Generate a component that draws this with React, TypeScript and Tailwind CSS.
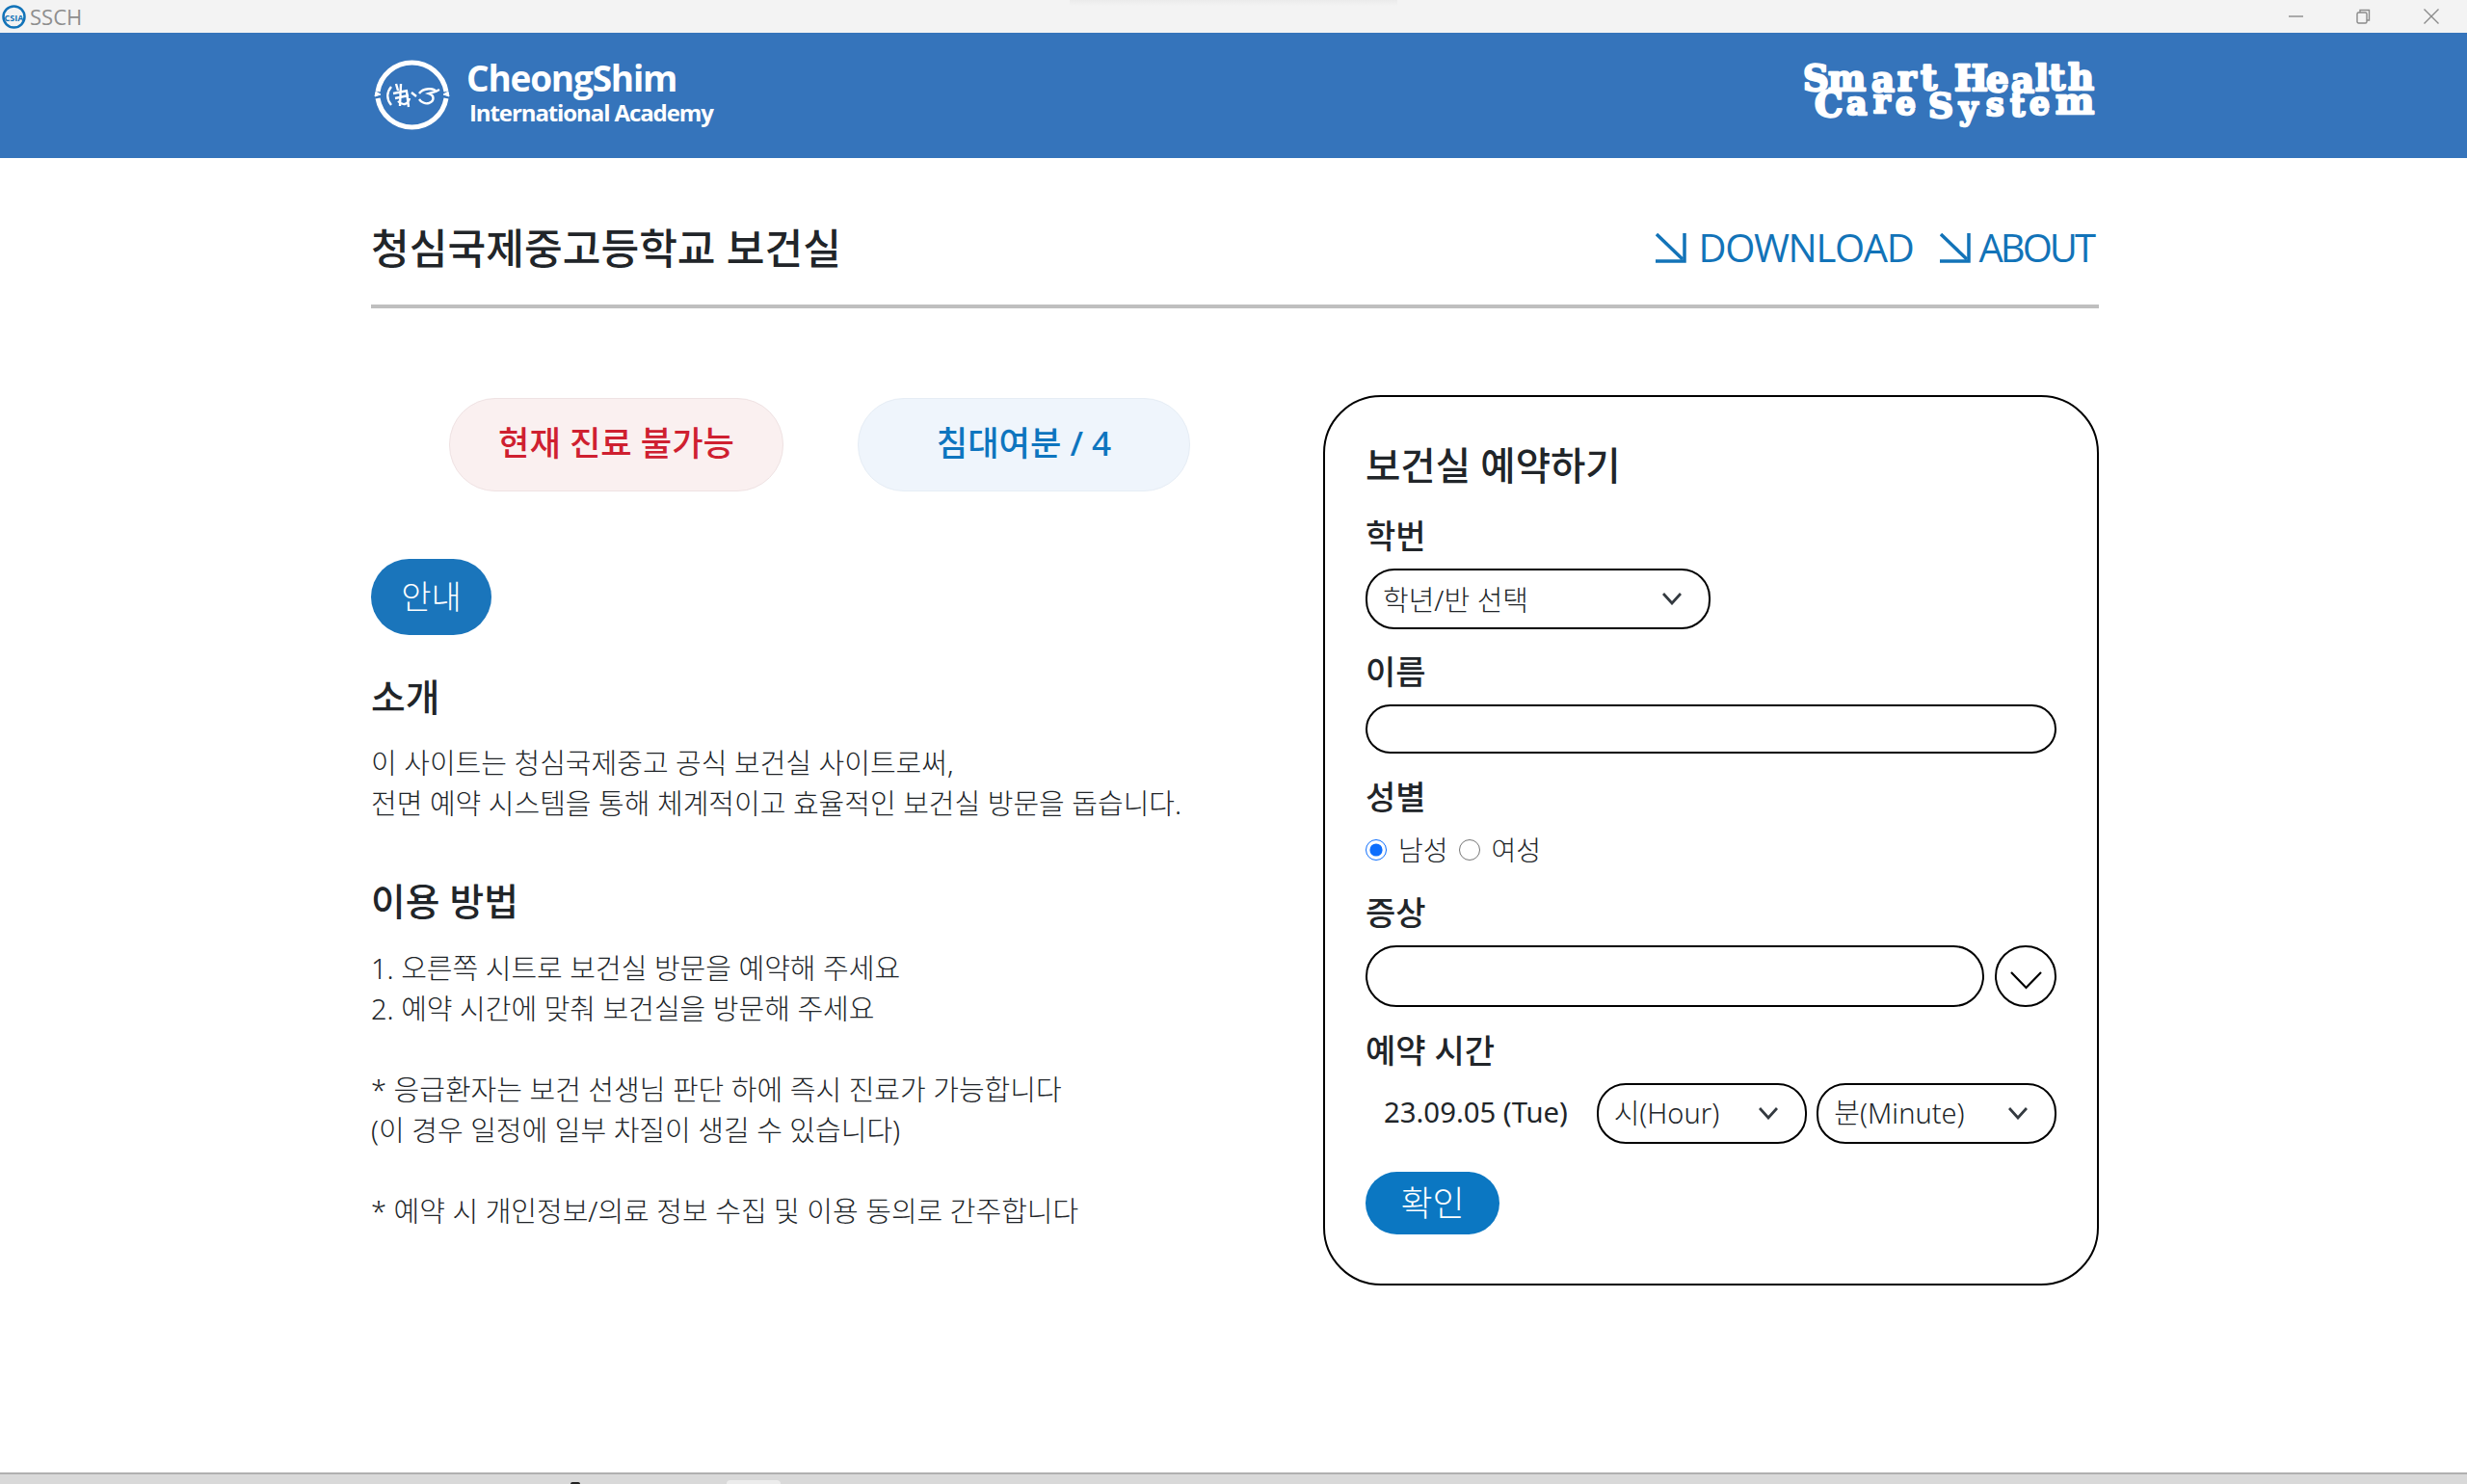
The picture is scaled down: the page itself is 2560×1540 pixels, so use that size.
const sans = "font-['Noto_Sans','Noto_Sans_CJK_KR',sans-serif]";

function CornerArrow() {
  return (
    <svg width="32" height="31" viewBox="0 0 32 31" fill="none" className="shrink-0 text-[#1273b8]">
      <path d="M1 1 L28 27" stroke="currentColor" strokeWidth="3.5" />
      <path d="M0 29 H30 V0" stroke="currentColor" strokeWidth="3.5" />
    </svg>
  );
}

function Chevron() {
  return (
    <svg width="20" height="13" viewBox="0 0 20 13" fill="none" stroke="#343a40" strokeWidth="2.8" className="shrink-0">
      <path d="M1 1 L10 11 L19 1" />
    </svg>
  );
}

function Emblem() {
  return (
    <svg width="85" height="85" viewBox="0 0 85 85" fill="none" stroke="white" className="shrink-0">
      <path d="M7 38 A36 36 0 0 1 78 38" strokeWidth="5" />
      <path d="M7 45 A36 36 0 0 0 78 45" strokeWidth="5" />
      <path d="M5 38 L10 41 L4 43 Z M80 38 L75 41 L81 43 Z" fill="white" strokeWidth="1" />
      <path d="M21 33 C16 39 16 46 21 52" strokeWidth="2.4" />
      <path d="M26 30 L28 37 M23 40 L38 37 M25 45 L39 42 M31 30 L30 53 M28 48 C33 53 38 52 40 45 M37 38 L39 54" strokeWidth="2.4" />
      <path d="M42 39 L47 43 M50 40 C54 34 66 34 67 38 L60 40 C66 42 66 48 60 50 C56 51 52 49 50 46" strokeWidth="2.4" />
      <path d="M67 38 L71 36" strokeWidth="2.4" />
    </svg>
  );
}

function HealthLogo() {
  return (
    <svg width="306" height="68" viewBox="11 10 306 68" fill="white" stroke="white" strokeWidth="2.4" strokeLinejoin="round" overflow="visible" className="shrink-0 font-['DejaVu_Serif',serif] font-bold">
      <text fontSize="37" x="10 36 81 108 132 150 167 200 226 251 265 285" y="39 39 40 39 38 38 39 40 41 39 38 38">Smart Health</text>
      <text fontSize="33" x="22 55 83 106 130 140 172 200 225 245 272" y="66 64 62 64 64 67 69 65 66 64 63">
        <tspan fontSize="37">C</tspan>are <tspan fontSize="36">S</tspan>yste<tspan fontSize="38">m</tspan>
      </text>
    </svg>
  );
}

function Label({ children, className = '' }: { children: React.ReactNode; className?: string }) {
  return <div className={`h-[44px] text-[34px] leading-[44px] font-medium text-[#212529] ${className}`}>{children}</div>;
}

function Select({ text, className, textClass = '' }: { text: string; className: string; textClass?: string }) {
  return (
    <div className={`flex h-[63px] items-center justify-between rounded-[30px] border-2 border-black pl-[16px] pr-[28px] text-[29px] font-light text-[#212529] ${className}`}>
      <span className={textClass}>{text}</span>
      <Chevron />
    </div>
  );
}

export default function App() {
  return (
    <div className={`relative flex h-[1540px] flex-col overflow-hidden bg-white ${sans}`}>
      {/* window title bar */}
      <div className="flex h-[34px] shrink-0 items-center bg-[#f3f3f3] pl-[2px]">
        <svg width="25" height="25" viewBox="0 0 25 25" fill="none" className="shrink-0">
          <circle cx="12.5" cy="12.5" r="11" stroke="#1273b8" strokeWidth="2.5" />
          <text x="12.5" y="16.5" textAnchor="middle" fontSize="9" fontWeight="700" fill="#1273b8" fontFamily="Open Sans">CSIA</text>
        </svg>
        <span className="ml-[4px] font-['Open_Sans',sans-serif] text-[22px] text-[#8e8e8e]">SSCH</span>
        <div className="ml-auto flex items-center text-[#8a8a8a]">
          <svg width="16" height="16" viewBox="0 0 16 16" fill="none" stroke="currentColor" strokeWidth="1.4" className="mr-[54px]">
            <path d="M0 8 H15" />
          </svg>
          <svg width="16" height="16" viewBox="0 0 16 16" fill="none" stroke="currentColor" strokeWidth="1.4" className="mr-[54px]">
            <rect x="1" y="4" width="10" height="11" rx="1.5" />
            <path d="M4 4 V1.5 H13.5 V12 H11" />
          </svg>
          <svg width="16" height="16" viewBox="0 0 16 16" fill="none" stroke="currentColor" strokeWidth="1.4" className="mr-[29px]">
            <path d="M0.5 0.5 L15.5 15.5 M15.5 0.5 L0.5 15.5" />
          </svg>
        </div>
      </div>
      <div className="absolute left-[1110px] top-0 h-[6px] w-[340px] bg-gradient-to-b from-[#ebebeb] to-transparent" />

      {/* site header */}
      <header className="h-[130px] shrink-0 bg-[#3574bb]">
        <div className="ml-[385px] flex h-full w-[1793px] items-center justify-between">
          <div className="flex items-center text-white">
            <Emblem />
            <div className="ml-[14px] mt-[-3px] font-['Open_Sans',sans-serif]">
              <div className="text-[37px] font-bold leading-[38px] tracking-[-1.2px]">CheongShim</div>
              <div className="ml-[3px] text-[24px] font-bold leading-[34px] tracking-[-1.1px]">International Academy</div>
            </div>
          </div>
          <HealthLogo />
        </div>
      </header>

      <main className="ml-[385px] w-[1793px] flex-1">
        <div className="flex h-[156px] items-center justify-between border-b-4 border-[#bfbfbf] pt-[36px]">
          <h1 className="text-[43.2px] font-medium text-[#212529]">청심국제중고등학교 보건실</h1>
          <nav className="flex items-center pb-[2px] font-['Open_Sans',sans-serif] text-[40px] font-medium leading-none text-[#1273b8]">
            <CornerArrow />
            <span className="ml-[12px] tracking-[-1.3px]">DOWNLOAD</span>
            <span className="ml-[27px]"><CornerArrow /></span>
            <span className="ml-[9px] mr-[6px] tracking-[-3px]">ABOUT</span>
          </nav>
        </div>

        <div className="mt-[90px] flex items-start justify-between">
          <section className="w-[860px] pt-[3px]">
            <div className="flex gap-[77px] pl-[81px] text-[35.2px] font-medium">
              <div className="flex h-[97px] w-[347px] items-center justify-center rounded-[48px] border border-[#efe2e3] bg-[#faf0f0] pb-[4px] text-[#cf2030]">현재 진료 불가능</div>
              <div className="flex h-[97px] w-[345px] items-center justify-center rounded-[48px] border border-[#e6edf5] bg-[#eff5fc] pb-[4px] text-[#0e75bf]">침대여분 / 4</div>
            </div>

            <div className="mt-[70px] flex h-[79px] w-[125px] items-center justify-center rounded-[40px] bg-[#1a75bb] text-[34px] font-light text-white">안내</div>

            <h2 className="mt-[39px] h-[50px] text-[38.8px] font-medium leading-[50px] text-[#212529]">소개</h2>
            <p className="mt-[23px] text-[29px] font-light leading-[42px] text-[#212529]">
              이 사이트는 청심국제중고 공식 보건실 사이트로써,
              <br />
              전면 예약 시스템을 통해 체계적이고 효율적인 보건실 방문을 돕습니다.
            </p>

            <h2 className="mt-[55px] h-[50px] text-[38.8px] font-medium leading-[50px] text-[#212529]">이용 방법</h2>
            <p className="mt-[24px] text-[29px] font-light leading-[42px] text-[#212529]">
              1. 오른쪽 시트로 보건실 방문을 예약해 주세요
              <br />
              2. 예약 시간에 맞춰 보건실을 방문해 주세요
              <br />
              <br />* 응급환자는 보건 선생님 판단 하에 즉시 진료가 가능합니다
              <br />
              (이 경우 일정에 일부 차질이 생길 수 있습니다)
              <br />
              <br />* 예약 시 개인정보/의료 정보 수집 및 이용 동의로 간주합니다
            </p>
          </section>

          <form className="w-[805px] rounded-[60px] border-2 border-black px-[42px] pb-[51px] pt-[46px]">
            <h2 className="h-[50px] text-[39.5px] font-medium leading-[50px] text-[#212529]">보건실 예약하기</h2>

            <Label className="mt-[26px]">학번</Label>
            <Select text="학년/반 선택" textClass="pt-[3px]" className="mt-[12px] w-[358px]" />

            <Label className="mt-[22px]">이름</Label>
            <div className="mt-[12px] h-[51px] rounded-[26px] border-2 border-black" />

            <Label className="mt-[23px]">성별</Label>
            <div className="mt-[17px] flex h-[32px] items-center text-[28px] font-light text-[#212529]">
              <input type="radio" name="gender" defaultChecked className="h-[22px] w-[22px] accent-[#0d6efd]" />
              <span className="ml-[12px]">남성</span>
              <input type="radio" name="gender" className="ml-[11px] h-[22px] w-[22px] accent-[#0d6efd]" />
              <span className="ml-[12px]">여성</span>
            </div>

            <Label className="mt-[27px]">증상</Label>
            <div className="mt-[12px] flex items-center gap-[11px]">
              <div className="h-[64px] flex-1 rounded-[32px] border-2 border-black" />
              <div className="flex h-[64px] w-[64px] shrink-0 items-center justify-center rounded-full border-2 border-black">
                <svg width="33" height="19" viewBox="0 0 33 19" fill="none" stroke="black" strokeWidth="2.2" className="mt-[8px]">
                  <path d="M1 1 L16.5 17 L32 1" />
                </svg>
              </div>
            </div>

            <Label className="mt-[23px]">예약 시간</Label>
            <div className="mt-[12px] flex items-center">
              <span className="ml-[19px] w-[221px] pb-[2px] text-[29.3px] text-[#212529]">23.09.05 (Tue)</span>
              <Select text="시(Hour)" textClass="pb-[2px]" className="w-[219px]" />
              <Select text="분(Minute)" textClass="pb-[2px]" className="ml-[10px] w-[249px]" />
            </div>

            <button type="button" className="mt-[29px] flex h-[65px] w-[139px] items-center justify-center rounded-[33px] bg-[#0b77c2] text-[36px] font-light text-white">확인</button>
          </form>
        </div>
      </main>

      {/* window bottom edge */}
      <div className="flex h-[12px] shrink-0 items-end border-t-2 border-[#b0b0b0] bg-[#d9d9d9]">
        <div className="ml-[592px] h-[2px] w-[10px] rounded-t-full bg-[#222]" />
        <div className="ml-[152px] h-[4px] w-[56px] rounded-t-[6px] bg-[#ececec]" />
      </div>
    </div>
  );
}
